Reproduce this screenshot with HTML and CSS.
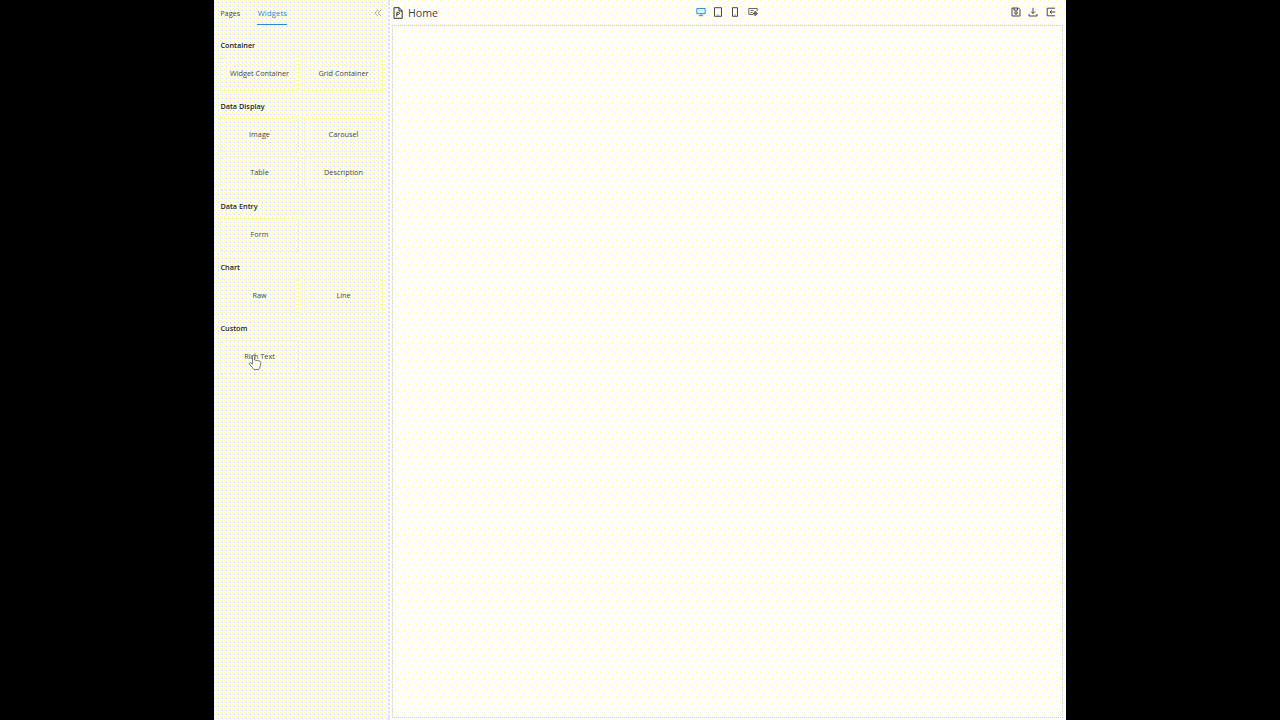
FILE: index.html
```html
<!DOCTYPE html>
<html lang="en">
<head>
<meta charset="utf-8">
<title>Page editor</title>
<link rel="stylesheet" href="styles.css">
</head>
<body>
<div class="app">
  <aside class="sidebar">
    <nav class="tabs">
      <span class="tab">Pages</span>
      <span class="tab active">Widgets</span>
      <svg class="collapse" viewBox="0 0 8 8"><path d="M4 .8 1 4l3 3.2M7.2.8l-3 3.2 3 3.2"/></svg>
    </nav>
    <section class="group"><h2>Container</h2><div class="cards"><div class="card">Widget Container</div><div class="card">Grid Container</div></div></section>
    <section class="group"><h2>Data Display</h2><div class="cards"><div class="card">Image</div><div class="card">Carousel</div><div class="card">Table</div><div class="card">Description</div></div></section>
    <section class="group"><h2>Data Entry</h2><div class="cards"><div class="card">Form</div></div></section>
    <section class="group"><h2>Chart</h2><div class="cards"><div class="card">Raw</div><div class="card">Line</div></div></section>
    <section class="group"><h2>Custom</h2><div class="cards"><div class="card">Rich Text
      <svg class="cursor" viewBox="0 0 14 17"><path d="M4.500 10V2.300c0-1.700 2-1.700 2 0V6l4.500.9c1.500.4 2 1 1.800 2.400L12 13l-1.300 2.500H6L1.500 10.300c-1-1.300.5-2 1.500-1.300z"/></svg>
    </div></div></section>
  </aside>
  <main class="main">
    <header class="bar">
      <div class="title">
        <svg class="page-icon" viewBox="0 0 10 12"><path d="M1 .7h5.200L9.200 4v7.300H1zM6 .7V4h3.200M3.800 9.500V5.300h1.700c1.300 0 1.300 2 0 2H3.800"/></svg>
        <span>Home</span>
      </div>
      <div class="devices">
        <svg class="icon blue" viewBox="0 0 10 10"><path d="M.8 1.500h8.400v5.200H.8zM5 6.700v2M2.800 8.700h4.400"/></svg>
        <svg class="icon" viewBox="0 0 10 10"><path d="M1.500.7h7v8.600h-7zM4.500 8h1"/></svg>
        <svg class="icon" viewBox="0 0 10 10"><path d="M2.500.7h5v8.600h-5zM4.500 8h1"/></svg>
        <svg class="icon grey" viewBox="0 0 10 10"><path d="M5 7.500H.8v-6h8.400V4M2.500 3.500h3M2.500 5.500h2"/><circle cx="7.300" cy="6.500" r="1.700"/><path d="M7.300 4.200v4.600M5 6.500h4.600"/></svg>
      </div>
      <div class="actions">
        <svg class="icon" viewBox="0 0 10 10"><path d="M1 1h6.500L9 2.500V9H1zM3 1v2.200h3.500V1"/><circle cx="5" cy="6" r="1.300"/></svg>
        <svg class="icon" viewBox="0 0 10 10"><path d="M5 .8v5.500M3 4.500l2 2 2-2M1 7v2h8V7"/></svg>
        <svg class="icon" viewBox="0 0 10 10"><path d="M9 1.200H1.200v7.600H9M9.300 5H4M5.800 3.500 4 5l1.800 1.500"/></svg>
      </div>
    </header>
    <div class="canvas"></div>
  </main>
</div>
</body>
</html>
```
FILE: styles.css
```css
* { box-sizing: border-box; }
body { margin: 0; height: 720px; overflow: hidden; background: #000; font-family: "Open Sans", "Noto Sans", sans-serif; font-size: 7.3px; color: #444; }
.app { display: flex; width: 852px; height: 720px; margin-left: 214px; }
.sidebar {
  width: 176px; padding: 0 6px; border-right: 2px dotted #dcdcee;
  background: #fdfdff url("data:image/svg+xml,%3Csvg xmlns='http://www.w3.org/2000/svg' width='4' height='4' shape-rendering='crispEdges'%3E%3Cpath fill='%23ffff88' d='M0 0h1v1H0z'/%3E%3Cpath fill='%23d0d0ff' d='M2 2h1v1H2z'/%3E%3C/svg%3E") 2px 0 / 4px 4px;
}
.tabs { display: flex; height: 25px; align-items: stretch; }
.tab { line-height: 26px; margin-right: 17px; padding-left: .2px; }
.tab.active { color: #2587cf; font-size: 7.6px; letter-spacing: .16px; padding-left: .5px; border-bottom: 1px solid #258bd2; }
.collapse { width: 8px; height: 8px; margin: 8.500px 0 0 auto; fill: none; stroke: #888; stroke-width: .7; }
.group { padding-top: 15px; height: 61px; }
.group:nth-of-type(1) { height: 61.300px; }
.group:nth-of-type(2) { height: 99.300px; }
h2 { margin: 0 0 6px; padding-left: .4px; font-size: 7.3px; line-height: 11px; font-weight: 600; color: #222; }
.cards { display: grid; grid-template-columns: 79px 79px; gap: 4px 5px; }
.card { position: relative; height: 34px; line-height: 31px; text-align: center; border: 1px dotted #f0f0b4; white-space: nowrap; }
.cursor { position: absolute; left: 27px; top: 13px; width: 14px; height: 17px; fill: #fff; stroke: #555; stroke-width: .8; }
.main {
  flex: 1; display: flex; flex-direction: column; padding: 0 3px 2px 2px;
  background: #fdfdff url("data:image/svg+xml,%3Csvg xmlns='http://www.w3.org/2000/svg' width='8' height='12' shape-rendering='crispEdges'%3E%3Cpath fill='%23ffff90' d='M0 0h1v1H0zM4 6h1v1H4z'/%3E%3C/svg%3E") 2px 0 / 8px 12px;
}
.bar { display: grid; grid-template-columns: 1fr auto 1fr; height: 25px; align-items: center; }
.title { display: flex; align-items: center; gap: 5px; font-size: 10.6px; line-height: 24px; padding-left: 1px; }
.page-icon { width: 10px; height: 12px; fill: none; stroke: #333; }
.devices { display: flex; gap: 7.300px; position: relative; left: -.8px; top: -.5px; }
.actions { display: flex; gap: 7.500px; justify-content: flex-end; padding: 0 7.500px 1px 0; }
.icon { width: 10px; height: 10px; fill: none; stroke: #333; stroke-width: .9; }
.icon.blue { stroke: #2388c9; fill: #d9f3ff; }
.icon.grey { stroke: #555; }
.canvas { flex: 1; border: 1px dotted #c9c9e8; }
```
